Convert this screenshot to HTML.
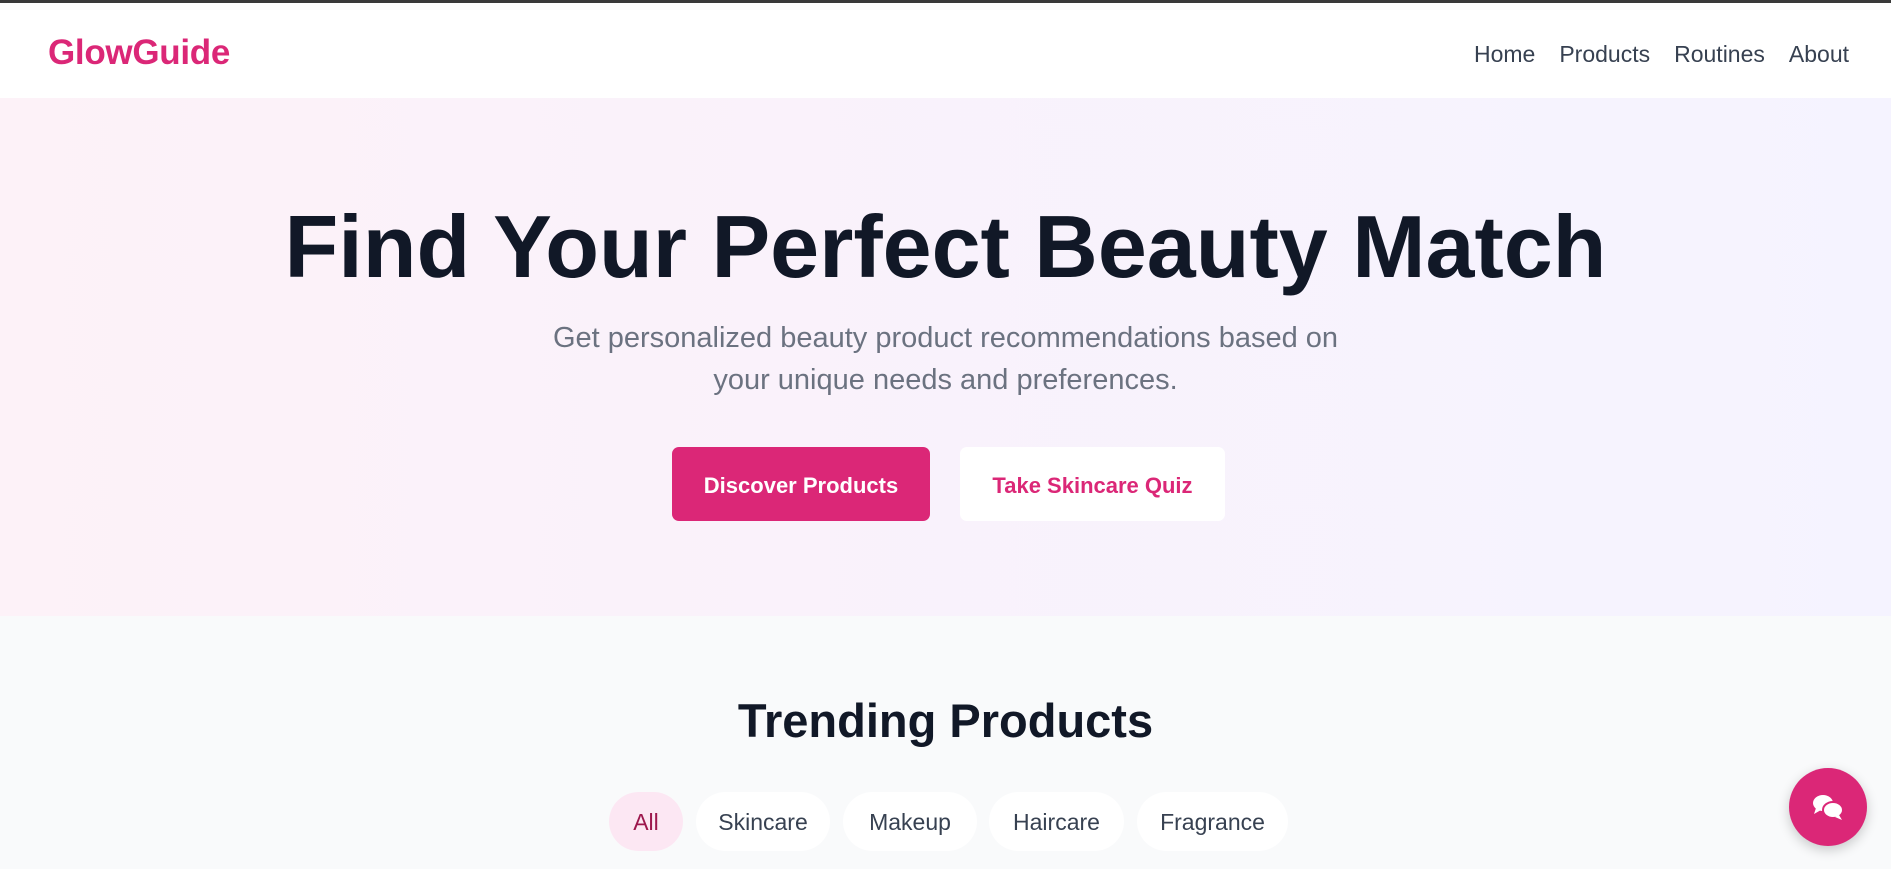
<!DOCTYPE html>
<html><head><meta charset="utf-8"><style>
*{margin:0;padding:0;box-sizing:border-box}
body{width:1891px;height:869px;overflow:hidden;font-family:"Liberation Sans",sans-serif;background:#f9fafb;position:relative}
.top{height:3px;background:#3a3a3a}
nav{height:95px;background:#fff;position:relative}
.logo{position:absolute;left:48px;top:30px;font-size:35px;font-weight:bold;color:#db2777;letter-spacing:-0.3px}
.links{position:absolute;right:42px;top:38px;font-size:23px;color:#374151}
.links span{margin-left:24px}
.hero{position:absolute;top:98px;left:0;width:1891px;height:518px;background:linear-gradient(90deg,#fdf2f8,#f5f3ff)}
h1{position:absolute;top:203px;width:1891px;text-align:center;font-size:88px;font-weight:bold;color:#111827;line-height:1}
.sub{position:absolute;top:317px;left:0;width:1891px;text-align:center;font-size:29px;line-height:42px;color:#6b7280}
.btn{position:absolute;top:447px;height:74px;border-radius:7px;font-size:22px;font-weight:bold;display:flex;align-items:center;justify-content:center;padding-top:3px}
.b1{left:672px;width:258px;background:#db2777;color:#fff}
.b2{left:960px;width:265px;background:#fff;color:#db2777}
h2{position:absolute;top:693px;width:1891px;text-align:center;font-size:47px;font-weight:bold;color:#111827}
.pill{position:absolute;top:792px;height:59px;border-radius:30px;background:#fff;font-size:23px;color:#374151;display:flex;align-items:center;justify-content:center;padding-top:2px}
.chat{position:absolute;left:1789px;top:768px;width:78px;height:78px;border-radius:50%;background:#db2777;box-shadow:0 4px 12px rgba(0,0,0,.2);display:flex;align-items:center;justify-content:center}
</style></head><body>
<div class="top"></div>
<nav><div class="logo">GlowGuide</div><div class="links"><span>Home</span><span>Products</span><span>Routines</span><span>About</span></div></nav>
<div class="hero"></div>
<h1>Find Your Perfect Beauty Match</h1>
<div class="sub">Get personalized beauty product recommendations based on<br>your unique needs and preferences.</div>
<div class="btn b1">Discover Products</div>
<div class="btn b2">Take Skincare Quiz</div>
<h2>Trending Products</h2>
<div class="pill" style="left:609px;width:74px;background:#fce7f3;color:#9d174d">All</div>
<div class="pill" style="left:696px;width:134px">Skincare</div>
<div class="pill" style="left:843px;width:134px">Makeup</div>
<div class="pill" style="left:989px;width:135px">Haircare</div>
<div class="pill" style="left:1137px;width:151px">Fragrance</div>
<div class="chat"><svg width="34" height="30" viewBox="0 0 34 30"><ellipse cx="12" cy="11" rx="10" ry="8" fill="#fff"/><path d="M5 16 L3 22 L10 18Z" fill="#fff"/><ellipse cx="22" cy="18" rx="10" ry="8" fill="#fff" stroke="#db2777" stroke-width="2"/><path d="M28 23 L31 28 L24 25Z" fill="#fff"/></svg></div>
</body></html>
